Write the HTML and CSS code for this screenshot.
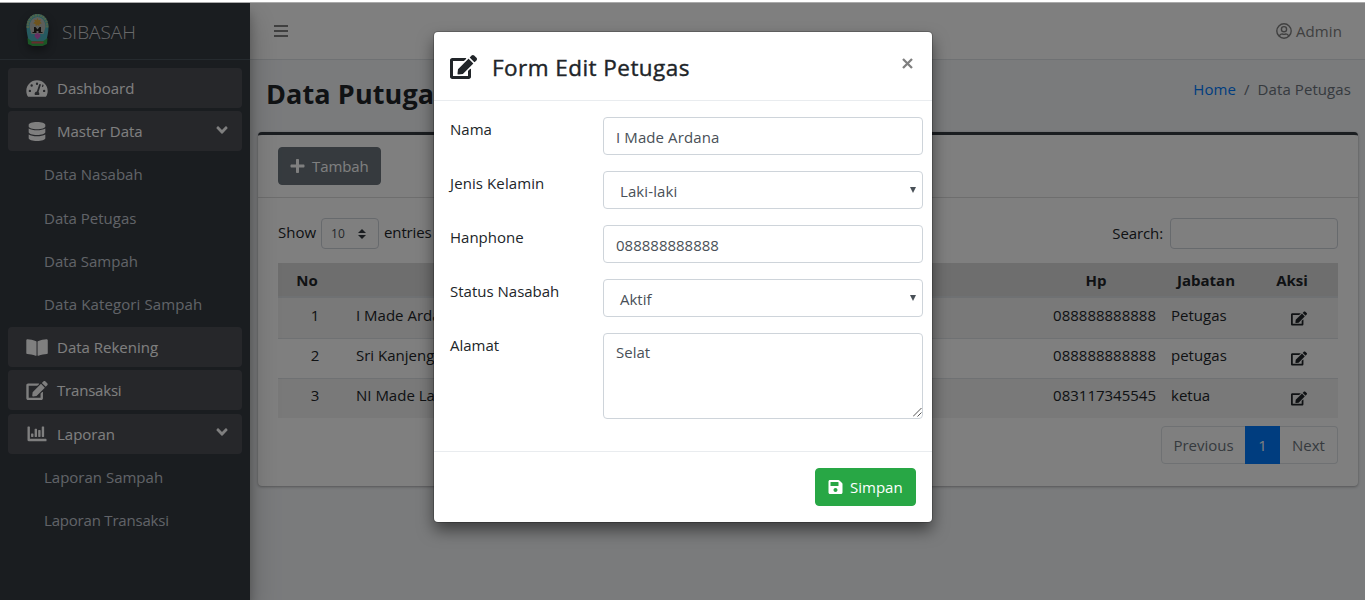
FILE: index.html
```html
<!DOCTYPE html>
<html lang="id">
<head>
<meta charset="utf-8">
<title>SIBASAH</title>
<link rel="stylesheet" href="styles.css">
</head>
<body>
<svg width="0" height="0" class="defs">
  <symbol id="edit" viewBox="0 0 576 512"><path d="M402.6 83.2l90.2 90.2c3.8 3.8 3.8 10 0 13.8L274.4 405.6l-92.8 10.3c-12.4 1.4-22.9-9.1-21.5-21.5l10.3-92.8L388.8 83.2c3.8-3.8 10-3.8 13.8 0zm162-22.9l-48.8-48.8c-15.2-15.2-39.9-15.2-55.2 0l-35.4 35.4c-3.8 3.8-3.8 10 0 13.8l90.2 90.2c3.8 3.8 10 3.8 13.8 0l35.4-35.4c15.2-15.3 15.2-40 0-55.2zM384 346.2V448H64V128h229.8c3.2 0 6.2-1.3 8.5-3.5l40-40c7.6-7.6 2.2-20.5-8.5-20.5H48C21.5 64 0 85.5 0 112v352c0 26.5 21.5 48 48 48h352c26.5 0 48-21.5 48-48V306.2c0-10.7-12.9-16-20.5-8.5l-40 40c-2.2 2.3-3.5 5.3-3.5 8.5z"/></symbol>
  <symbol id="database" viewBox="0 0 448 512"><path d="M448 73.143v45.714C448 159.143 347.667 192 224 192S0 159.143 0 118.857V73.143C0 32.857 100.333 0 224 0s224 32.857 224 73.143zM448 176v102.857C448 319.143 347.667 352 224 352S0 319.143 0 278.857V176c48.125 33.143 136.208 48.572 224 48.572S399.874 209.143 448 176zm0 160v102.857C448 479.143 347.667 512 224 512S0 479.143 0 438.857V336c48.125 33.143 136.208 48.572 224 48.572S399.874 369.143 448 336z"/></symbol>
  <symbol id="gauge" viewBox="0 0 576 512"><path fill-rule="evenodd" d="M288 32C129 32 0 161 0 320c0 53 14 102 39 145 6 9 16 15 27 15h444c11 0 21-6 27-15 25-43 39-92 39-145C576 161 447 32 288 32zM288 96a32 32 0 1 1 0 64 32 32 0 1 1 0-64zM144 144a32 32 0 1 1 0 64 32 32 0 1 1 0-64zM96 288a32 32 0 1 1 0 64 32 32 0 1 1 0-64zM480 288a32 32 0 1 1 0 64 32 32 0 1 1 0-64zM375 135c13 4 20 18 15 30l-61 184c14 12 23 29 23 51 0 12-3 23-9 32H233c-6-9-9-20-9-32 0-34 27-63 60-64l61-186c4-12 17-19 30-15zM428 148a32 32 0 1 1-10 60l17-52z"/></symbol>
  <symbol id="book" viewBox="0 0 576 512"><path d="M542 32c-55 3-164 15-232 56-5 3-7 8-7 13v364c0 12 13 19 24 14 70-35 171-45 221-48 17-1 30-14 30-30V62c-1-17-17-31-36-30zM266 88C198 47 89 36 34 32 15 31 0 45 0 62v339c0 16 13 29 30 30 50 3 151 13 221 48 11 5 24-2 24-14V101c0-5-4-10-9-13z"/></symbol>
  <symbol id="chart" viewBox="0 0 512 512"><path d="M64 400V80c0-9-7-16-16-16H16C7 64 0 71 0 80v352c0 18 14 32 32 32h464c9 0 16-7 16-16v-32c0-9-7-16-16-16zM109 352h38c6 0 13-6 13-13v-70c0-7-7-13-13-13h-38c-7 0-13 6-13 13v70c0 7 6 13 13 13zM205 352h38c6 0 13-6 13-13V141c0-7-7-13-13-13h-38c-7 0-13 6-13 13v198c0 7 6 13 13 13zM301 352h38c6 0 13-6 13-13V173c0-7-7-13-13-13h-38c-7 0-13 6-13 13v166c0 7 6 13 13 13zM397 352h38c6 0 13-6 13-13V77c0-7-7-13-13-13h-38c-7 0-13 6-13 13v262c0 7 6 13 13 13z"/></symbol>
  <symbol id="angle" viewBox="0 0 320 512"><path d="M143 352.3L7 216.3c-9.4-9.4-9.4-24.6 0-33.9l22.6-22.6c9.4-9.4 24.6-9.4 33.9 0l96.4 96.4 96.4-96.4c9.4-9.4 24.6-9.4 33.9 0l22.6 22.6c9.4 9.4 9.4 24.6 0 33.9l-136 136c-9.2 9.4-24.4 9.4-33.8 0z"/></symbol>
  <symbol id="plus" viewBox="0 0 448 512"><path d="M416 208H272V64c0-17.67-14.33-32-32-32h-32c-17.67 0-32 14.33-32 32v144H32c-17.67 0-32 14.33-32 32v32c0 17.67 14.33 32 32 32h144v144c0 17.67 14.33 32 32 32h32c17.67 0 32-14.33 32-32V304h144c17.67 0 32-14.33 32-32v-32c0-17.67-14.33-32-32-32z"/></symbol>
  <symbol id="save" viewBox="0 0 448 512"><path d="M433.941 129.941l-83.882-83.882A48 48 0 0 0 316.118 32H48C21.49 32 0 53.49 0 80v352c0 26.51 21.49 48 48 48h352c26.51 0 48-21.49 48-48V163.882a48 48 0 0 0-14.059-33.941zM224 416c-35.346 0-64-28.654-64-64 0-35.346 28.654-64 64-64s64 28.654 64 64c0 35.346-28.654 64-64 64zm96-304.52V212c0 6.627-5.373 12-12 12H76c-6.627 0-12-5.373-12-12V108c0-6.627 5.373-12 12-12h228.520c3.183 0 6.235 1.264 8.485 3.515l3.480 3.480A11.996 11.996 0 0 1 320 111.480z"/></symbol>
</svg>
<div class="app">
  <aside class="sidebar">
    <div class="brand">
      <svg class="logo" viewBox="0 0 24 33">
        <path d="M12 1C18.500 1 23 7 23 14c0 6-1.500 10-2 14H3C2.500 24 1 20 1 14 1 7 5.500 1 12 1z" fill="#4cb4c0"/>
        <path d="M2.300 15C1.800 7 6 2.200 12 2.200S22.200 7 21.700 15" fill="none" stroke="#9fc795" stroke-width="2.400" stroke-dasharray="2 .6"/>
        <path d="M4 14C4 7.500 8 4 12 4s8 3.500 8 10l-2 7H6z" fill="#b9bdb6"/>
        <path d="M12 5l1 2.200 2.300-.6-.7 2.200 1.800 1.400-2.300.8-.3 2.300L12 12l-1.800 1.300-.3-2.300-2.300-.8 1.800-1.400-.7-2.200 2.300.6z" fill="#dca83c"/>
        <path d="M8.500 14h1.500l2 2.500 2-2.500h1.500v5H17v1h-4v-2h-2v2H7v-1h1.500z" fill="#26221f"/>
        <path d="M9.500 21l2.500-1 2.500 1 .5 2.500-3 3-3-3z" fill="#c961c4"/>
        <path d="M2 25l4 3h12l4-3-.5 6-4.500 2H7l-4.500-2z" fill="#36ad4b"/>
        <path d="M6 28.500h12v2H6z" fill="#d0575f"/>
      </svg>
      <span>SIBASAH</span>
    </div>
    <nav class="menu">
      <a class="item"><svg class="ic"><use href="#gauge"/></svg><span>Dashboard</span></a>
      <a class="item"><svg class="ic"><use href="#database"/></svg><span>Master Data</span><svg class="caret"><use href="#angle"/></svg></a>
      <a class="sub">Data Nasabah</a>
      <a class="sub">Data Petugas</a>
      <a class="sub">Data Sampah</a>
      <a class="sub wide">Data Kategori Sampah</a>
      <a class="item"><svg class="ic"><use href="#book"/></svg><span>Data Rekening</span></a>
      <a class="item"><svg class="ic"><use href="#edit"/></svg><span class="tight">Transaksi</span></a>
      <a class="item"><svg class="ic"><use href="#chart"/></svg><span>Laporan</span><svg class="caret"><use href="#angle"/></svg></a>
      <a class="sub">Laporan Sampah</a>
      <a class="sub tight">Laporan Transaksi</a>
    </nav>
  </aside>
  <main class="main">
    <header class="topbar">
      <svg class="bars" viewBox="0 0 14 12"><path d="M0 1h14M0 6h14M0 11h14" stroke="currentColor" stroke-width="2"/></svg>
      <div class="user">
        <svg viewBox="0 0 16 16"><circle cx="8" cy="8" r="7.200"/><circle cx="8" cy="6.200" r="2.600"/><path d="M3.300 13.200c.5-1.700 1.500-2.300 2.700-2.300 1 .5 3 .5 4 0 1.200 0 2.200.6 2.700 2.300"/></svg>
        <span>Admin</span>
      </div>
    </header>
    <div class="heading">
      <h1>Data Putugas</h1>
      <div class="crumbs"><a>Home</a><span class="sep">/</span><span>Data Petugas</span></div>
    </div>
    <section class="card">
      <div class="card-head"><button class="btn gray"><svg><use href="#plus"/></svg><span>Tambah</span></button></div>
      <div class="card-body">
        <div class="tools">
          <div class="length"><span class="lab">Show</span><span class="mini">10<svg viewBox="0 0 8 10"><path d="M4 0l4 4H0zM4 10l4-4H0z"/></svg></span><span class="lab">entries</span></div>
          <div class="search"><span>Search:</span><input></div>
        </div>
        <table>
          <colgroup><col class="c1"><col><col class="c3"><col class="c4"><col class="c5"></colgroup>
          <thead><tr><th>No</th><th>Nama</th><th>Hp</th><th>Jabatan</th><th>Aksi</th></tr></thead>
          <tbody>
            <tr><td>1</td><td>I Made Ardana</td><td class="num">088888888888</td><td>Petugas</td><td><svg><use href="#edit"/></svg></td></tr>
            <tr><td>2</td><td>Sri Kanjeng</td><td class="num">088888888888</td><td>petugas</td><td><svg><use href="#edit"/></svg></td></tr>
            <tr><td>3</td><td>NI Made Lastri</td><td class="num">083117345545</td><td>ketua</td><td><svg><use href="#edit"/></svg></td></tr>
          </tbody>
        </table>
        <div class="pager"><span class="prev">Previous</span><span class="cur">1</span><span class="next">Next</span></div>
      </div>
    </section>
  </main>
  <div class="backdrop">
    <div class="modal">
      <div class="modal-head">
        <svg class="title-ic"><use href="#edit"/></svg>
        <h4>Form Edit Petugas</h4>
        <svg class="close" viewBox="0 0 11 11"><path d="M1 1l9 9M10 1l-9 9" stroke="currentColor" stroke-width="2.300"/></svg>
      </div>
      <form class="modal-body">
        <div class="row"><label>Nama</label><div class="field wide">I Made Ardana</div></div>
        <div class="row"><label class="wide">Jenis Kelamin</label><div class="field select wide">Laki-laki</div></div>
        <div class="row"><label>Hanphone</label><div class="field">088888888888</div></div>
        <div class="row"><label>Status Nasabah</label><div class="field select">Aktif</div></div>
        <div class="row"><label>Alamat</label><div class="field area">Selat<svg class="grip" viewBox="0 0 9 9"><path d="M0 8.500L8.500 0M4.500 8.500l4-4" stroke="#555" stroke-width="1"/></svg></div></div>
      </form>
      <div class="modal-foot"><button class="btn green"><svg><use href="#save"/></svg><span>Simpan</span></button></div>
    </div>
  </div>
</div>
</body>
</html>
```
FILE: styles.css
```css
* { box-sizing: border-box; }
body { margin: 0; background: #fff; font: 15px/24px "Open Sans", "Noto Sans", sans-serif; color: #212529; overflow: hidden; }
.defs { position: absolute; }
svg { fill: currentColor; flex: none; }
h1, h4 { margin: 0; }
.wide { letter-spacing: .1px; }
.app { position: relative; display: flex; height: 598px; margin-top: 2px; border-top: 1px solid #aaa; background: #f4f6f9; overflow: hidden; }

.sidebar { position: relative; z-index: 1; width: 250px; flex: none; background: #343a40; box-shadow: 0 14px 28px rgba(0,0,0,.25), 0 10px 10px rgba(0,0,0,.22); }
.brand { display: flex; align-items: center; height: 57px; padding-left: 25px; border-bottom: 1px solid #4b545c; color: #cfd1d3; font-size: 19px; font-weight: 300; letter-spacing: 0; }
.brand span { margin-top: 2px; }
.logo { width: 25px; height: 33px; margin: -4px 12px 0 0; filter: drop-shadow(0 4px 4px rgba(0,0,0,.4)); }
.menu { display: flex; flex-direction: column; gap: 3.2px; padding: 8px; }
.item { display: flex; align-items: center; height: 40px; padding: 0 14px 0 18px; border-radius: 4px; background: #4c4e55; color: #fff; }
.item span { flex: 1; }
.ic { width: 22px; height: 19px; margin-right: 9px; }
.caret { width: 12px; height: 18px; margin-top: -3px; }
.sub { height: 40px; padding: 8px 0 0 36px; color: #c2c7d0; }
.tight { letter-spacing: -.2px; }

.main { flex: 1; min-width: 0; }
.topbar { display: flex; justify-content: space-between; align-items: center; height: 57px; padding: 0 23px 0 24px; background: #fff; border-bottom: 1px solid #dee2e6; color: #808080; }
.bars { width: 14px; height: 12px; }
.user { display: flex; align-items: center; gap: 4px; letter-spacing: .1px; }
.user svg { width: 16px; height: 16px; margin-top: -1px; fill: none; stroke: currentColor; stroke-width: 1.4px; }
.heading { display: flex; justify-content: space-between; height: 72px; padding: 15px 14px 0 16px; }
h1 { font-size: 27px; line-height: 38px; font-weight: 700; letter-spacing: .1px; }
.crumbs { display: flex; padding-top: 2px; color: #6c757d; letter-spacing: .08px; }
.crumbs a { color: #007bff; }
.sep { margin: 0 8px; }
.card { height: 354px; margin: 0 7px 0 8px; border-top: 3px solid #343a40; border-radius: 4px; background: #fff; box-shadow: 0 0 1px rgba(0,0,0,.125), 0 1px 3px rgba(0,0,0,.3); }
.card-head { height: 63px; padding: 12px 20px; border-bottom: 1px solid #dcdcdc; }
.btn { display: flex; align-items: center; height: 38px; padding: 0 12px; border: 1px solid; border-radius: 4px; font: inherit; color: #fff; }
.btn svg { width: 15px; height: 16px; margin-right: 7px; }
.gray { width: 103px; padding-left: 11px; background: #6c757d; border-color: #6c757d; letter-spacing: -.1px; }
.green { width: 101px; background: #28a745; border-color: #28a745; }
.card-body { padding: 20px; }
.tools { display: flex; justify-content: space-between; height: 45px; }
.length, .search { display: flex; height: 31px; align-items: center; gap: 5px; }
.lab { margin-top: -3px; }
.mini { display: flex; align-items: center; justify-content: space-between; width: 58px; height: 31px; padding: 1px 12px 0 9px; border: 1px solid #ced4da; border-radius: 4px; font-size: 12px; color: #495057; }
.mini svg { width: 8px; height: 10px; color: #343a40; }
.mini + .lab { letter-spacing: -.15px; }
.search { gap: 7px; letter-spacing: -.1px; }
.search span { margin-top: -2px; }
.search input { width: 168px; height: 31px; border: 1px solid #ced4da; border-radius: 4px; background: #fff; }

table { width: 1060px; table-layout: fixed; border-collapse: separate; border-spacing: 0; }
.c1 { width: 73px; }
.c3 { width: 119px; }
.c4 { width: 101px; }
.c5 { width: 74px; }
th { height: 35px; padding: 0 23px 0 8px; background: #dcdcdc; border-bottom: 2px solid #dee2e6; font-weight: 700; text-align: center; }
th:last-child { padding-right: 26px; }
td { height: 40px; padding: 4px 7px 11px 8px; border-top: 1px solid #dee2e6; }
tbody tr:first-child td { border-top: 0; padding-top: 5px; }
tbody tr:nth-child(odd) { background: #f2f2f2; }
td:nth-child(2) { padding-left: 5px; }
td:first-child, td:last-child { text-align: center; }
td:last-child { padding-right: 13px; }
td svg { display: block; width: 16px; height: 15px; margin: 7px auto 0; }
.num { white-space: nowrap; text-align: right; }
.pager { display: flex; justify-content: flex-end; margin-top: 8px; line-height: 36px; color: #6c757d; text-align: center; }
.pager span { height: 38px; border: 1px solid #dee2e6; }
.prev { width: 85px; border-radius: 4px 0 0 4px; }
.pager .cur { width: 35px; margin-left: -1px; background: #007bff; border-color: #007bff; color: #fff; }
.next { width: 58px; border-left: 0 !important; border-radius: 0 4px 4px 0; }

.backdrop { position: absolute; inset: 0; z-index: 2; display: flex; justify-content: center; align-items: flex-start; padding-top: 29px; background: rgba(0,0,0,.5); }
.modal { width: 498px; height: 490px; margin-left: 1px; border-radius: 4px; background: #fff; box-shadow: 0 0 0 1px rgba(0,0,0,.2), 0 8px 16px rgba(0,0,0,.5); }
.modal-head { display: flex; height: 69px; padding: 16px; border-bottom: 1px solid #e9ecef; }
.title-ic { width: 27px; height: 24px; margin-top: 7px; }
h4 { flex: 1; margin-left: 15px; font-size: 22.5px; line-height: 39px; font-weight: 500; letter-spacing: .45px; -webkit-text-stroke: .4px; white-space: nowrap; }
.close { width: 11px; height: 11px; margin: 10px 3px 0 0; color: #7f7f7f; }
.modal-body { display: flex; flex-direction: column; gap: 16px; height: 350px; padding: 16px 9px 0 16px; }
.row { display: flex; justify-content: space-between; }
.row label { white-space: nowrap; }
.field { width: 320px; height: 38px; padding: 7px 12px; border: 1px solid #ced4da; border-radius: 4px; color: #495057; }
.select { display: flex; justify-content: space-between; padding: 7px 6px 0 16px; }
.select::after { content: ""; width: 6px; height: 6px; margin-top: 8px; background: #495057; clip-path: polygon(0 0, 100% 0, 50% 100%); }
.area { display: flex; justify-content: space-between; height: 86px; padding: 6px 0 0 12px; }
.grip { align-self: flex-end; width: 9px; height: 9px; margin-bottom: 1px; }
.modal-foot { display: flex; justify-content: flex-end; padding: 16px; border-top: 1px solid #e9ecef; }
```
